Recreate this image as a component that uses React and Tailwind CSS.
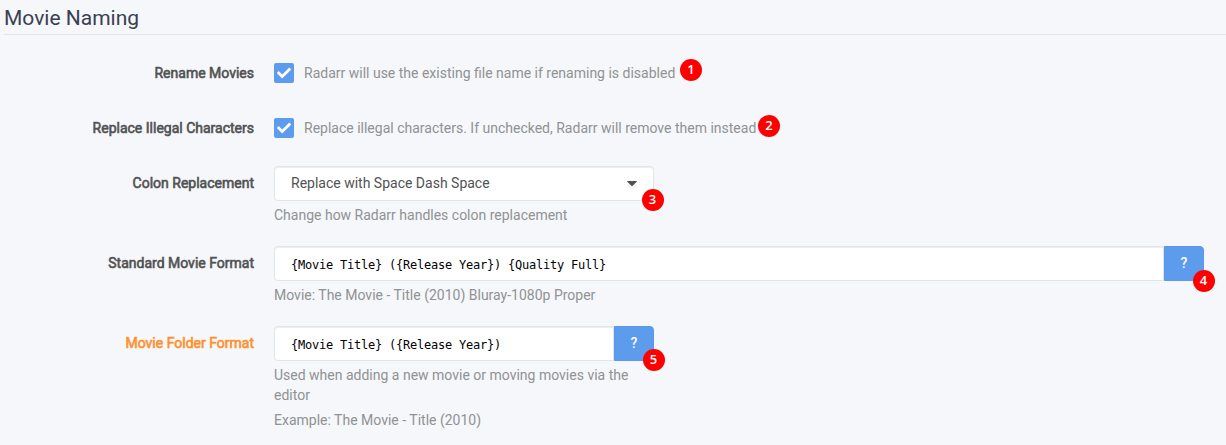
import React from 'react';

function Badge({ n, className }) {
  return (
    <span className={`absolute flex h-[22px] w-[22px] items-center justify-center rounded-full bg-[#ff0000] pb-px font-['Open_Sans',sans-serif] text-[13px] leading-none font-semibold text-white ${className}`}>
      {n}
    </span>
  );
}

function Check() {
  return (
    <span className="mt-[7px] mr-[10px] flex h-5 w-5 shrink-0 items-center justify-center rounded-[2px] bg-[#5d9cec]">
      <svg viewBox="0 0 512 512" className="h-[14px] w-[14px] fill-white">
        <path d="M173.898 439.404l-166.4-166.4c-9.997-9.997-9.997-26.206 0-36.204l36.203-36.204c9.997-9.998 26.207-9.998 36.204 0L192 312.69 432.095 72.596c9.997-9.997 26.207-9.997 36.204 0l36.203 36.204c9.997 9.997 9.997 26.206 0 36.204l-294.4 294.401c-9.998 9.997-26.207 9.997-36.204-.001z" />
      </svg>
    </span>
  );
}

function Row({ label, advanced, className, children }) {
  return (
    <div className={`flex items-start ${className}`}>
      <div className={`mr-5 w-[250px] shrink-0 text-right leading-[35px] font-normal [-webkit-text-stroke:0.6px_currentColor] ${advanced ? 'text-[#ff902b]' : 'text-[#515253]'}`}>
        {label}
      </div>
      {children}
    </div>
  );
}

const box = "h-[35px] border border-[#dde6e9] bg-white shadow-[inset_0_1px_1px_rgba(0,0,0,0.075)]";
const mono = "flex items-center px-4 pt-0.5 font-['DejaVu_Sans_Mono',monospace] text-[12px] tracking-[-0.224px] text-black";
const help = "leading-5 text-[#909293]";

export default function App() {
  return (
    <div className="h-[445px] overflow-hidden bg-[#f5f7fa] pl-1 font-[Roboto,sans-serif] text-[14px] text-[#515253]">
      <h1 className="h-[35px] border-b border-[#e5e5e5] text-[21px] leading-9 font-normal text-[#3a3f51]">Movie Naming</h1>
      <Row label="Rename Movies" className="mt-[21px] h-[55px]">
        <Check />
        <div className="relative mt-[7px] leading-5 text-[#909293]">
          Radarr will use the existing file name if renaming is disabled
          <Badge n="1" className="top-[-4px] left-[376px]" />
        </div>
      </Row>
      <Row label="Replace Illegal Characters" className="h-[55px]">
        <Check />
        <div className="relative mt-[7px] leading-5 text-[#909293]">
          Replace illegal characters. If unchecked, Radarr will remove them instead
          <Badge n="2" className="top-[-3px] left-[454px]" />
        </div>
      </Row>
      <Row label="Colon Replacement" className="h-20">
        <div className="relative w-[380px]">
          <div className={`flex items-center justify-between rounded px-4 ${box}`}>
            Replace with Space Dash Space
            <svg viewBox="0 0 10 6" className="h-[6px] w-[10px] fill-[#515253]"><path d="M.5 0h9q.7.2.2.8L5.5 5q-.5.4-1 0L.3.8Q-.2.2.5 0z" /></svg>
          </div>
          <div className={`mt-1 ${help}`}>Change how Radarr handles colon replacement</div>
          <Badge n="3" className="top-[22.5px] left-[367.5px]" />
        </div>
      </Row>
      <Row label="Standard Movie Format" className="h-20">
        <div className="relative w-[930px]">
          <div className="flex">
            <div className={`w-[890px] rounded-l ${box} ${mono}`}>{'{Movie Title} ({Release Year}) {Quality Full}'}</div>
            <div className="flex h-[35px] w-10 items-center justify-center rounded-r border border-[#5899eb] bg-[#5d9cec] font-medium text-white">?</div>
          </div>
          <div className={`mt-1 ${help}`}>Movie: The Movie - Title (2010) Bluray-1080p Proper</div>
          <Badge n="4" className="top-[23.5px] left-[918.5px]" />
        </div>
      </Row>
      <Row label="Movie Folder Format" advanced className="">
        <div className="relative w-[380px]">
          <div className="flex">
            <div className={`w-[340px] rounded-l ${box} ${mono}`}>{'{Movie Title} ({Release Year})'}</div>
            <div className="flex h-[35px] w-10 items-center justify-center rounded-r border border-[#5899eb] bg-[#5d9cec] font-medium text-white">?</div>
          </div>
          <div className={`mt-1 ${help}`}>Used when adding a new movie or moving movies via the editor</div>
          <div className={`mt-[5px] ${help}`}>Example: The Movie - Title (2010)</div>
          <Badge n="5" className="top-[22.5px] left-[368.5px]" />
        </div>
      </Row>
    </div>
  );
}
